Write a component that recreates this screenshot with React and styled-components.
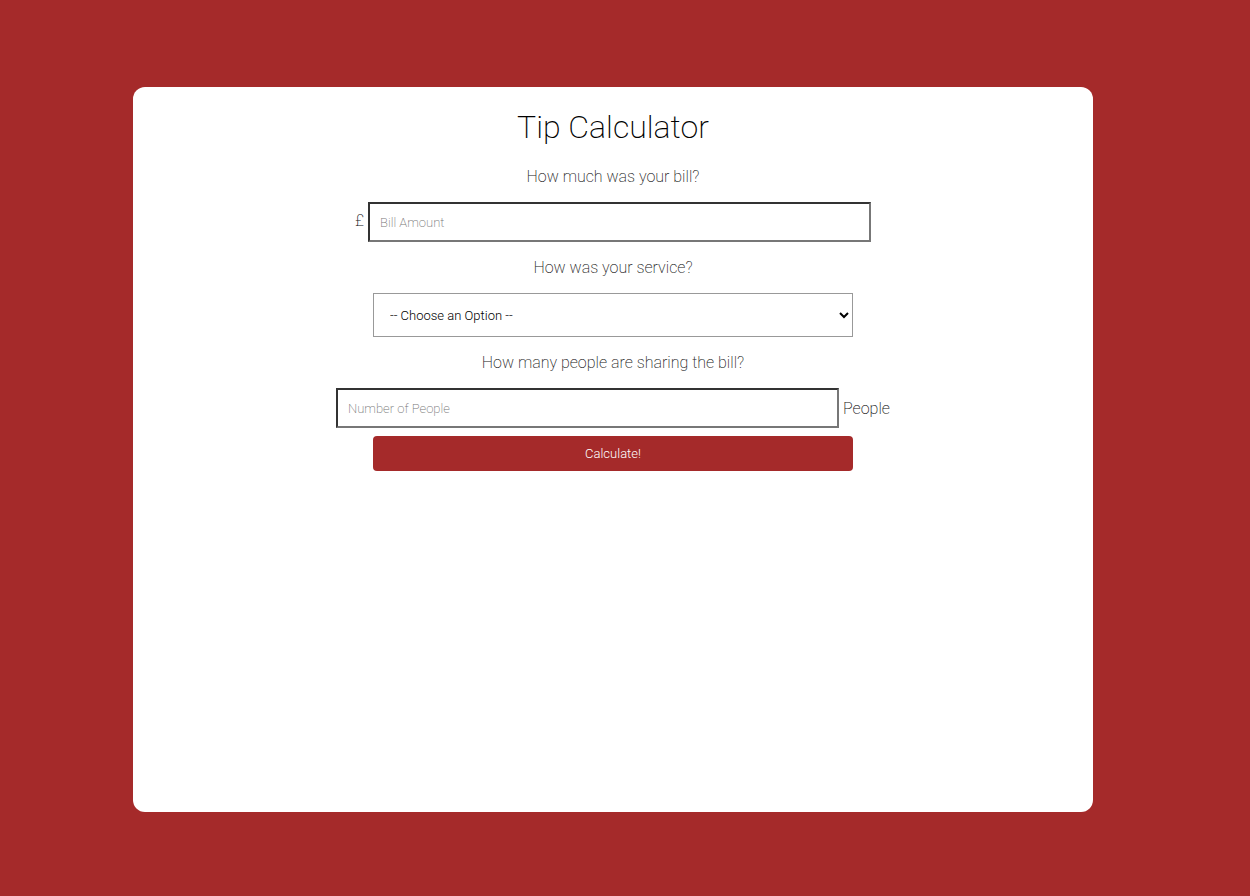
import React from "react";
import styled, { createGlobalStyle } from "styled-components";

const Global = createGlobalStyle`
  html, body { margin: 0; padding: 0; background: #a52a2a; }
  body { font-family: Roboto, "Liberation Sans", sans-serif; font-weight: 300; }
`;

const Page = styled.div`
  min-height: 896px;
  box-sizing: border-box;
  padding: 87px 157px 84px 133px;
  display: flex;
`;

const Card = styled.main`
  flex: 1;
  height: 725px;
  background: #fff;
  border-radius: 12px;
  display: flex;
  flex-direction: column;
  align-items: center;
`;

const Title = styled.h1`
  margin: 19px 0 0;
  font-size: 32px;
  font-weight: 200;
  line-height: 42px;
  color: #000;
`;

const Question = styled.p`
  margin: ${(p) => p.$top}px 0 16px;
  font-size: 16px;
  font-weight: 200;
  line-height: 19px;
  color: #222;
  text-align: center;
`;

const Row = styled.div`
  display: flex;
  align-items: center;
  gap: 4px;
`;

const Affix = styled.span`
  font-size: 16px;
  color: #111;
  font-weight: 200;
  margin-top: ${(p) => p.$up ? "-4px" : "0"};
`;

const TextInput = styled.input`
  box-sizing: border-box;
  width: 503px;
  height: 40px;
  border-style: solid;
  border-width: 2px;
  border-color: #333 #777 #777 #333;
  padding: 0 10px;
  font-family: Roboto, "Liberation Sans", sans-serif;
  font-weight: 200;
  font-size: 13px;
  outline: none;
  background: #fff;
  &::placeholder { color: #777; }
`;

const Select = styled.select`
  box-sizing: border-box;
  width: 480px;
  height: 44px;
  border: 1px solid #999;
  border-radius: 0;
  padding: 0 10px 0 12px;
  background: #fff;
  font-family: Roboto, "Liberation Sans", sans-serif;
  font-weight: 300;
  font-size: 13px;
  color: #000;
`;

const Button = styled.button`
  box-sizing: border-box;
  width: 480px;
  height: 35px;
  margin-top: 8px;
  border: none;
  border-radius: 4px;
  background: #a52a2a;
  color: #fff;
  font-family: Roboto, "Liberation Sans", sans-serif;
  font-weight: 300;
  font-size: 13px;
  cursor: pointer;
`;

export default function App() {
  return (
    <>
      <Global />
      <Page>
        <Card>
          <Title>Tip Calculator</Title>
          <Question $top={19}>How much was your bill?</Question>
          <Row>
            <Affix $up>£</Affix>
            <TextInput type="number" placeholder="Bill Amount" />
          </Row>
          <Question $top={16}>How was your service?</Question>
          <Select defaultValue="">
            <option value="" disabled>-- Choose an Option --</option>
            <option value="0.3">30% - Outstanding</option>
            <option value="0.2">20% - Good</option>
            <option value="0.15">15% - It was OK</option>
            <option value="0.1">10% - Bad</option>
            <option value="0.05">5% - Terrible</option>
          </Select>
          <Question $top={16}>How many people are sharing the bill?</Question>
          <Row>
            <TextInput type="number" placeholder="Number of People" />
            <Affix>People</Affix>
          </Row>
          <Button>Calculate!</Button>
        </Card>
      </Page>
    </>
  );
}
